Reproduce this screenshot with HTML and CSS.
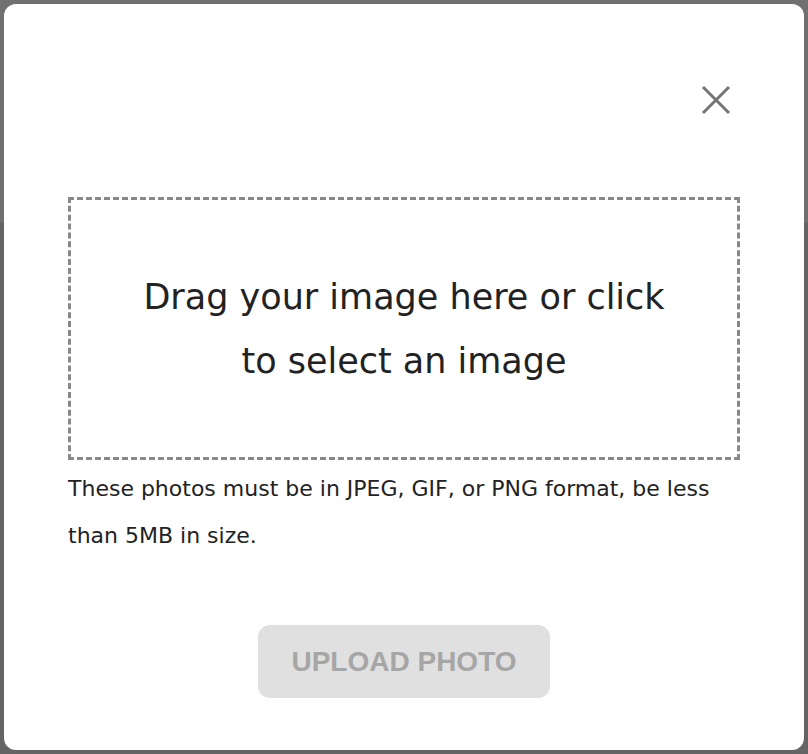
FILE: index.html
```html
<!DOCTYPE html>
<html lang="en">
<head>
<meta charset="utf-8">
<title>Upload photo</title>
<link rel="stylesheet" href="styles.css">
</head>
<body>
<div class="backdrop">
  <div class="modal" role="dialog" aria-label="Upload photo">
    <div class="modal-header">
      <button class="close-btn" aria-label="Close">
        <svg width="48" height="48" viewBox="0 0 48 48" aria-hidden="true">
          <path d="M11 11 L37 37 M37 11 L11 37" stroke="#757575" stroke-width="3" fill="none"/>
        </svg>
      </button>
    </div>
    <div class="dropzone">
      <p class="dropzone-text">Drag your image here or click<br>to select an image</p>
    </div>
    <p class="hint">These photos must be in JPEG, GIF, or PNG format, be less than 5MB in size.</p>
    <div class="actions">
      <button class="upload-btn" disabled>UPLOAD PHOTO</button>
    </div>
  </div>
</div>
</body>
</html>
```

FILE: styles.css
```css
html, body {
  margin: 0;
  padding: 0;
}

body {
  font-family: "DejaVu Sans", Verdana, sans-serif;
  background: #646464;
}

.backdrop {
  box-sizing: border-box;
  width: 808px;
  height: 754px;
  padding: 4px;
  background: linear-gradient(to bottom, #707070 0, #707070 222px, #646464 223px, #646464 100%);
}

.modal {
  box-sizing: border-box;
  height: 746px;
  background: #ffffff;
  border-radius: 12px;
  padding: 72px 64px 0;
  display: flex;
  flex-direction: column;
}

.modal-header {
  display: flex;
  justify-content: flex-end;
  margin-bottom: 73px;
}

.close-btn {
  width: 48px;
  height: 48px;
  padding: 0;
  border: 0;
  background: transparent;
  display: block;
}

.close-btn svg {
  display: block;
}

.dropzone {
  box-sizing: border-box;
  height: 263px;
  border: 3px dashed #888888;
  display: flex;
  align-items: center;
  justify-content: center;
}

.dropzone-text {
  margin: 0;
  font-size: 35px;
  line-height: 64px;
  color: #222222;
  text-align: center;
}

.hint {
  margin: 5px 0 0;
  font-size: 22px;
  line-height: 47px;
  color: #222222;
}

.actions {
  display: flex;
  justify-content: center;
  margin-top: 66px;
}

.upload-btn {
  font-family: "Liberation Sans", Arial, sans-serif;
  font-weight: bold;
  font-size: 28px;
  line-height: 73px;
  height: 73px;
  padding: 0 33px;
  border: 0;
  border-radius: 12px;
  background: #e0e0e0;
  color: #a6a6a6;
}
```
